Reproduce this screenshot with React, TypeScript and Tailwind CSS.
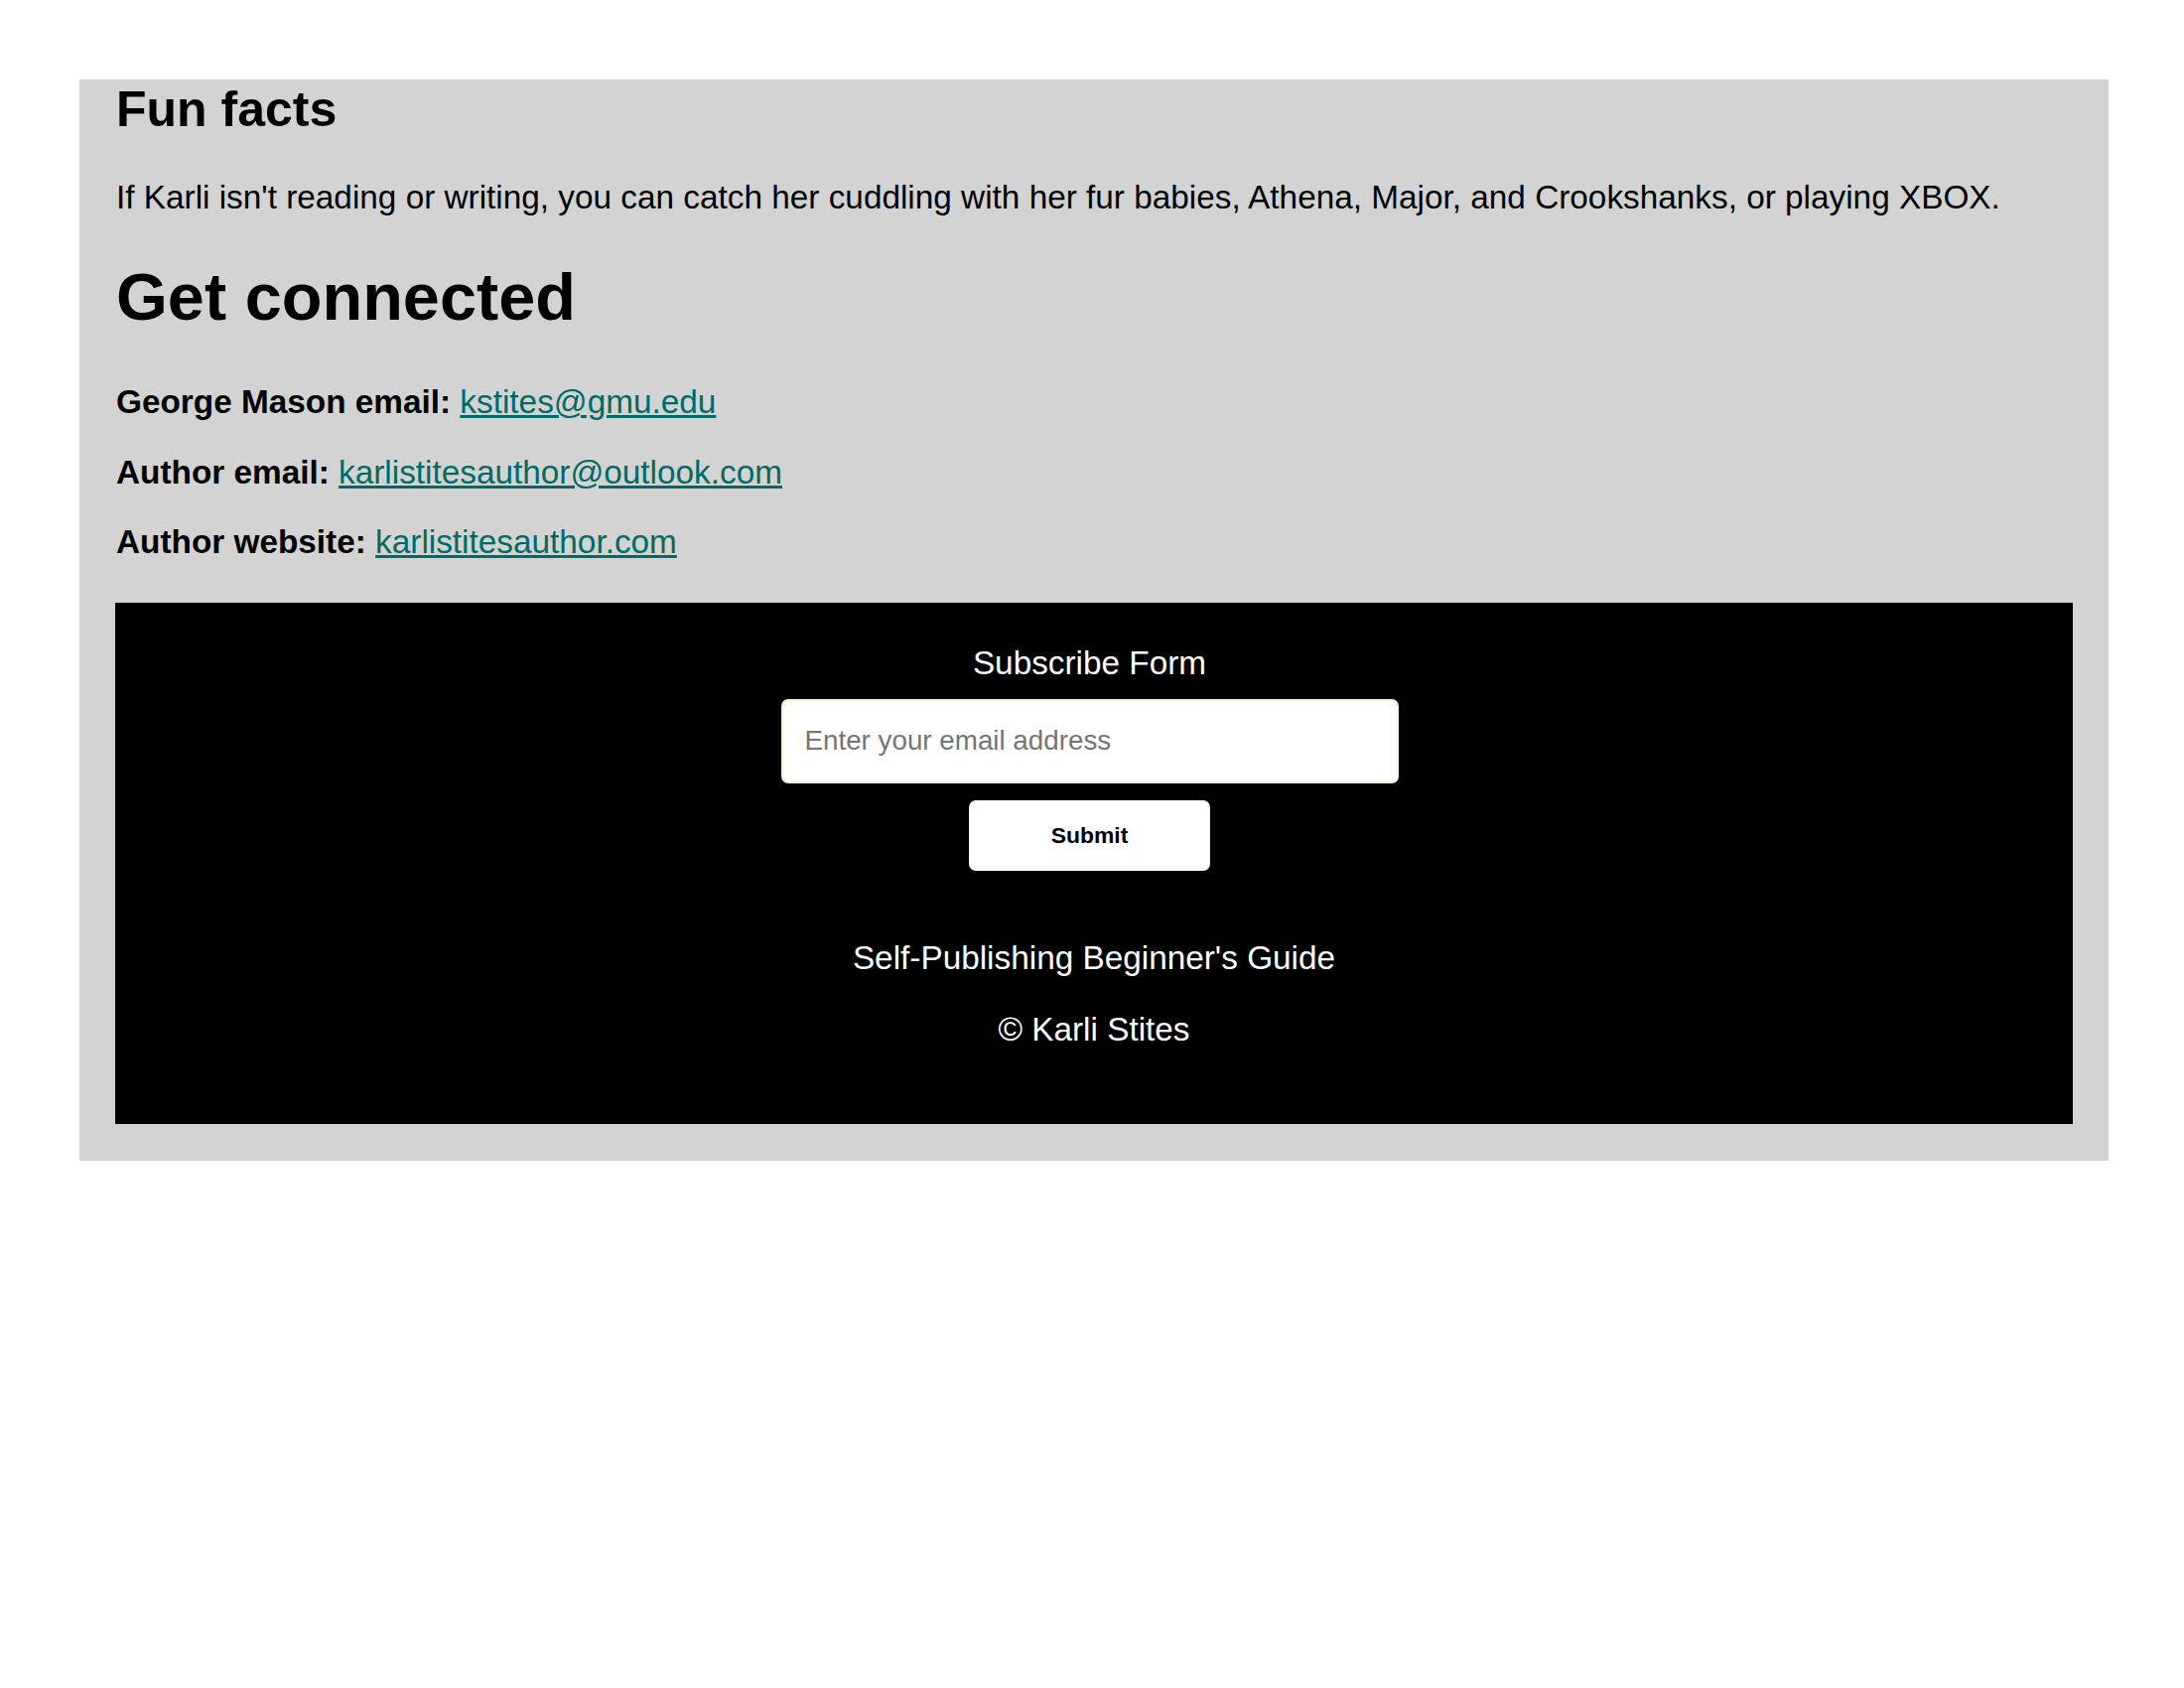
export default function App() {
  return (
    <div className="min-h-[1700px] bg-white pt-[80px] font-['Liberation_Sans',Arial,sans-serif] text-black">
      <main className="ml-[80px] w-[2044px] bg-[#d3d3d3] px-[36px] pt-[2px] pb-[37px]">
        <h2 className="mb-[40px] pl-[1px] text-[50px] font-bold leading-[1.15]">Fun facts</h2>
        <p className="mb-[43px] pl-[1px] text-[33.33px] leading-[1.15]">
          If Karli isn't reading or writing, you can catch her cuddling with her fur babies, Athena, Major, and
          Crookshanks, or playing XBOX.
        </p>

        <h1 className="mb-[49px] pl-[1px] text-[66.67px] font-bold leading-[1.15]">Get connected</h1>
        <div className="flex flex-col gap-[32px] pl-[1px] text-[33.33px] leading-[1.15]">
          <p>
            <strong>George Mason email:</strong>{" "}
            <a href="#" className="text-[#006a66] underline">
              kstites@gmu.edu
            </a>
          </p>
          <p>
            <strong>Author email:</strong>{" "}
            <a href="#" className="text-[#006a66] underline">
              karlistitesauthor@outlook.com
            </a>
          </p>
          <p>
            <strong>Author website:</strong>{" "}
            <a href="#" className="text-[#006a66] underline">
              karlistitesauthor.com
            </a>
          </p>
        </div>

        <footer className="mt-[42px] flex h-[525px] flex-col items-center bg-black pt-[42px] text-white">
          <form className="flex flex-col items-center pr-[9px]" onSubmit={(e) => e.preventDefault()}>
            <p className="text-[33.33px] leading-[1.15]">Subscribe Form</p>
            <input
              type="email"
              placeholder="Enter your email address"
              className="mt-[16px] h-[85px] w-[622px] rounded-[7px] border-2 border-[#f0f0d8] bg-white px-[22px] text-[27.78px] text-black placeholder:text-[#757575] outline-none"
            />
            <button
              type="submit"
              className="mt-[17px] h-[71px] w-[243px] rounded-[7px] bg-white text-[22.9px] font-bold text-black"
            >
              Submit
            </button>
          </form>
          <p className="mt-[69px] text-[33.33px] leading-[1.15]">Self-Publishing Beginner's Guide</p>
          <p className="mt-[34px] text-[33.33px] leading-[1.15]">© Karli Stites</p>
        </footer>
      </main>
    </div>
  )
}
